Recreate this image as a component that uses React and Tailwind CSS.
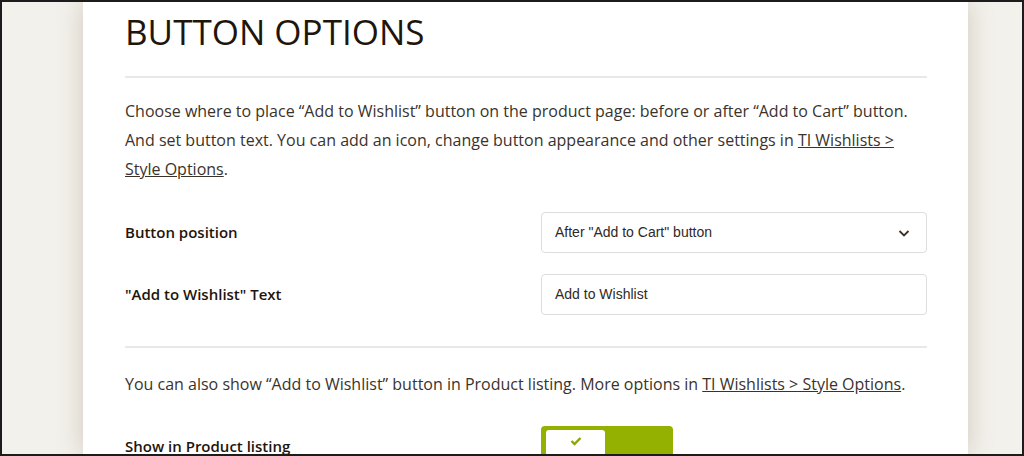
export default function App() {
  return (
    <div className="w-[1024px] h-[456px] overflow-hidden border-2 border-[#1c1c1c] bg-[#f3f1ec] font-['Open_Sans',sans-serif]">
      <div className="ml-[81px] w-[885px] h-full bg-white shadow-[0_0_24px_rgba(120,100,70,0.28)] pl-[42px] pr-[41px] pt-[8px]">
        <h1 className="text-[35px] leading-[44px] text-[#1f150b] font-normal">BUTTON OPTIONS</h1>
        <div className="mt-[22px] h-[2px] bg-[#e8e8e8]" />

        <p className="mt-[19px] text-[16px] leading-[29px] text-[#3b332b]">
          Choose where to place “Add to Wishlist” button on the product page: before or after “Add to Cart” button.
          <br />
          And set button text. You can add an icon, change button appearance and other settings in{" "}
          <a className="underline">TI Wishlists &gt;</a>
          <br />
          <a className="underline">Style Options</a>.
        </p>

        <div className="mt-[28px] flex items-center h-[41px]">
          <label className="w-[416px] text-[15px] font-semibold text-[#1f150b]">Button position</label>
          <div className="flex-1 h-full flex items-center justify-between rounded-[4px] border border-[#dddddd] pl-[13px] pr-[15px] font-['Liberation_Sans',Arial,sans-serif] text-[14px] text-[#2f2a25]">
            <span>After "Add to Cart" button</span>
            <svg width="14" height="14" viewBox="0 0 14 14" fill="none" stroke="#3a3129" strokeWidth="1.8">
              <path d="M2.5 5l4.5 4.5L11.5 5" />
            </svg>
          </div>
        </div>

        <div className="mt-[21px] flex items-center h-[41px]">
          <label className="w-[416px] text-[15px] font-semibold text-[#1f150b]">"Add to Wishlist" Text</label>
          <div className="flex-1 h-full flex items-center rounded-[4px] border border-[#dddddd] pl-[13px] font-['Liberation_Sans',Arial,sans-serif] text-[14px] text-[#2f2a25]">
            Add to Wishlist
          </div>
        </div>

        <div className="mt-[31px] h-[2px] bg-[#e8e8e8]" />

        <p className="mt-[22px] text-[16px] leading-[29px] text-[#3b332b]">
          You can also show “Add to Wishlist” button in Product listing. More options in{" "}
          <a className="underline">TI Wishlists &gt; Style Options</a>.
        </p>

        <div className="mt-[27px] flex items-center h-[40px]">
          <label className="w-[416px] text-[15px] font-semibold text-[#1f150b]">Show in Product listing</label>
          <div className="w-[132px] h-full rounded-[4px] bg-[#94b000] pt-[4px] pl-[5px]">
            <div className="w-[59px] h-[32px] rounded-[3px] bg-white flex justify-center pt-[6px]">
              <svg width="12" height="10" viewBox="0 0 12 10" fill="none" stroke="#8aa800" strokeWidth="2.4">
                <path d="M1.5 5l3 3 6-6" />
              </svg>
            </div>
          </div>
        </div>
      </div>
    </div>
  );
}
